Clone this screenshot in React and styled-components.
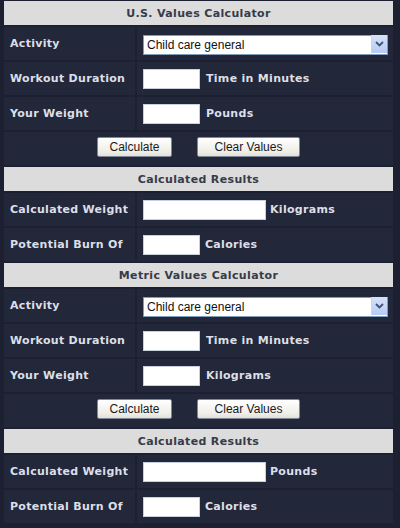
import React from "react";
import styled, { createGlobalStyle } from "styled-components";

const GlobalStyle = createGlobalStyle`
  html, body {
    margin: 0;
    padding: 0;
    background: #1c2030;
  }
  body {
    font-family: "DejaVu Sans", Verdana, sans-serif;
  }
`;

const activities = ["Child care general", "Aerobics", "Bicycling", "Running"];

const Calculator = ({ title, weightUnit, resultUnit }) => (
  <>
    <Header>{title}</Header>
    <Label>Activity</Label>
    <Cell>
      <SelectWrap>
        <Select defaultValue={activities[0]}>
          {activities.map((a) => (
            <option key={a}>{a}</option>
          ))}
        </Select>
        <Arrow>
          <svg width="9" height="6" viewBox="0 0 9 6">
            <path d="M1 1 L4.5 4.5 L8 1" fill="none" stroke="#3f5378" strokeWidth="1.8" />
          </svg>
        </Arrow>
      </SelectWrap>
    </Cell>
    <Label>Workout Duration</Label>
    <Cell>
      <TextBox $width={57} />
      <Unit $gap={6}>Time in Minutes</Unit>
    </Cell>
    <Label>Your Weight</Label>
    <Cell>
      <TextBox $width={57} />
      <Unit $gap={6}>{weightUnit}</Unit>
    </Cell>
    <ButtonRow>
      <Button $width={75}>Calculate</Button>
      <Button $width={103}>Clear Values</Button>
    </ButtonRow>
    <Header>Calculated Results</Header>
    <Label>Calculated Weight</Label>
    <Cell>
      <TextBox $width={123} />
      <Unit $gap={4}>{resultUnit}</Unit>
    </Cell>
    <Label>Potential Burn Of</Label>
    <Cell>
      <TextBox $width={57} />
      <Unit $gap={5}>Calories</Unit>
    </Cell>
  </>
);

const App = () => (
  <>
    <GlobalStyle />
    <Table>
      <Calculator title="U.S. Values Calculator" weightUnit="Pounds" resultUnit="Kilograms" />
      <Calculator title="Metric Values Calculator" weightUnit="Kilograms" resultUnit="Pounds" />
    </Table>
  </>
);

const Table = styled.div`
  display: grid;
  grid-template-columns: 131px 256px;
  gap: 2px;
  width: 389px;
  margin: 1px 0 0 4px;
`;

const Header = styled.div`
  grid-column: 1 / -1;
  height: 24px;
  background: #dcdcdc;
  color: #363b4a;
  font-size: 11px;
  font-weight: bold;
  text-align: center;
  line-height: 25px;
  letter-spacing: 0.35px;
`;

const Label = styled.div`
  display: flex;
  align-items: center;
  height: 33px;
  padding-left: 6px;
  background: #22273a;
  color: #dcdfe6;
  font-size: 11px;
  font-weight: bold;
  letter-spacing: 0.3px;
  white-space: nowrap;
`;

const Cell = styled.div`
  display: flex;
  align-items: center;
  height: 33px;
  padding-left: 6px;
  background: #22273a;
`;

const SelectWrap = styled.div`
  position: relative;
  width: 245px;
  height: 20px;
`;

const Select = styled.select`
  appearance: none;
  width: 100%;
  height: 20px;
  margin: 0;
  padding: 0 0 0 3px;
  border: 1px solid #7f9db9;
  border-radius: 0;
  background: #fff;
  color: #111;
  font-family: "Liberation Sans", Arial, sans-serif;
  font-size: 12px;
  outline: none;
`;

const Arrow = styled.span`
  position: absolute;
  top: 1px;
  right: 1px;
  width: 15px;
  height: 18px;
  display: flex;
  align-items: center;
  justify-content: center;
  background: linear-gradient(#d6e2fb, #b8cbf3);
  border-left: 1px solid #c8d6f4;
  pointer-events: none;
`;

const TextBox = styled.input`
  width: ${(p) => p.$width}px;
  height: 20px;
  box-sizing: border-box;
  margin: 0;
  border: 1px solid #c9cfdc;
  background: #fff;
  outline: none;
`;

const Unit = styled.span`
  margin-left: ${(p) => p.$gap}px;
  color: #dcdfe6;
  font-size: 11px;
  font-weight: bold;
  letter-spacing: 0.3px;
  white-space: nowrap;
`;

const ButtonRow = styled.div`
  grid-column: 1 / -1;
  display: flex;
  align-items: center;
  justify-content: center;
  gap: 25px;
  height: 33px;
  padding-bottom: 3px;
  box-sizing: border-box;
  background: #22273a;
`;

const Button = styled.button`
  width: ${(p) => p.$width}px;
  height: 20px;
  padding: 0;
  border: 1px solid #7d8798;
  border-radius: 2px;
  background: linear-gradient(#ffffff, #f0efe9 70%, #e2e1da);
  color: #1a1a1a;
  font-family: "Liberation Sans", Arial, sans-serif;
  font-size: 12px;
`;

export default App;
